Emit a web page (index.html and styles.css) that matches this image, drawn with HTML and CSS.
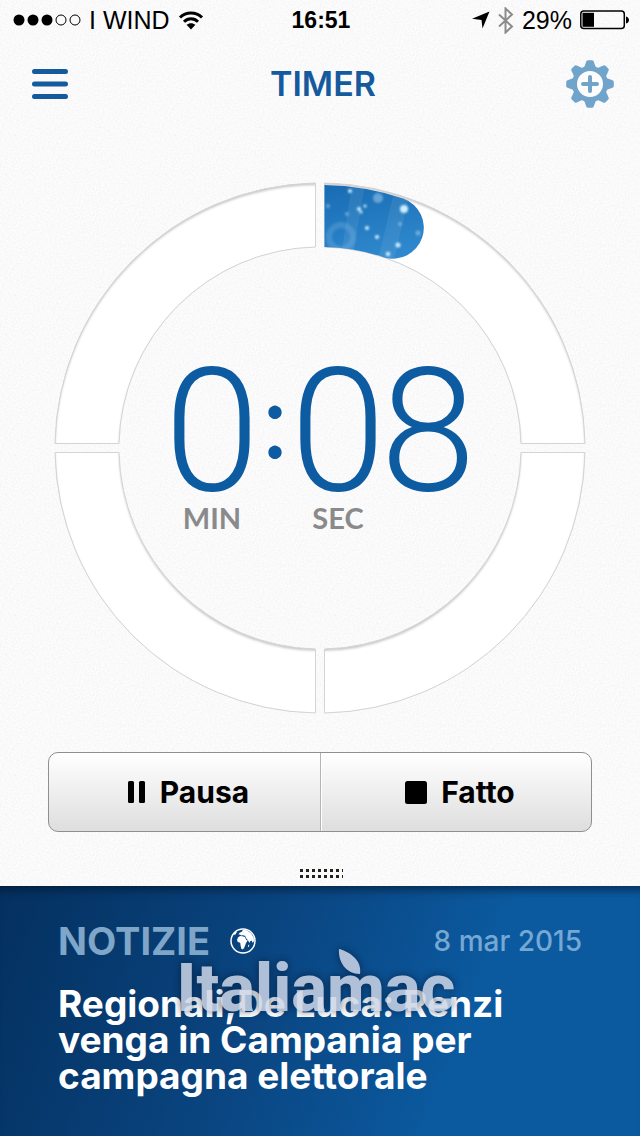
FILE: index.html
```html
<!DOCTYPE html>
<html lang="it">
<head>
  <meta charset="UTF-8">
  <meta name="viewport" content="width=device-width, initial-scale=1.0">
  <title>Timer</title>
  <link rel="stylesheet" href="styles.css">
</head>
<body>
  <div class="status-bar">
    <div class="status-left">
      <svg class="signal" viewBox="0 0 68 12" width="68" height="12">
        <circle cx="6" cy="6" r="5.5"/><circle cx="20" cy="6" r="5.5"/><circle cx="34" cy="6" r="5.5"/>
        <circle class="empty" cx="48" cy="6" r="5"/><circle class="empty" cx="62" cy="6" r="5"/>
      </svg>
      <span>I WIND</span>
      <svg class="wifi" viewBox="0 0 26 19" width="26" height="19">
        <path d="M2 6.5C8 .5 18 .5 24 6.5M6 10.8c4-4 10-4 14 0"/>
        <path class="solid" d="M13 18.5l-4.4-4.7c2.5-2.2 6.3-2.2 8.8 0z"/>
      </svg>
    </div>
    <span class="clock">16:51</span>
    <div class="status-right">
      <svg viewBox="0 0 18 18" width="18" height="18"><path d="M17.500.5L10.500 17.500 9.500 9 0 7.800z"/></svg>
      <svg class="bluetooth" viewBox="0 0 16 27" width="16" height="27"><path d="M1 7.500l13 12-6.500 6V1.500l6.500 6-13 12"/></svg>
      <span>29%</span>
      <svg class="battery" viewBox="0 0 49 20" width="49" height="20">
        <rect class="shell" x=".8" y="1" width="43.500" height="17.500" rx="3"/>
        <rect x="2.500" y="2.800" width="11.500" height="14"/>
        <path d="M46 6.500c4 1 4 6 0 7z"/>
      </svg>
    </div>
  </div>

  <header class="nav">
    <button class="icon-button" type="button" aria-label="Menu">
      <svg class="menu-icon" viewBox="0 0 36 32" width="36" height="32"><path d="M2.500 3.500h31M2.500 16h31M2.500 28.500h31"/></svg>
    </button>
    <h1>TIMER</h1>
    <button class="icon-button" type="button" aria-label="Impostazioni">
      <svg class="gear-icon" viewBox="-24 -24 48 48" width="48" height="48">
        <defs><path id="tooth" d="M-6.500-15L-3.700-22.500Q-3.200-23.800-2-23.800h4Q3.200-23.800 3.700-22.500L6.500-15z"/></defs>
        <use href="#tooth"/>
        <use href="#tooth" transform="rotate(45)"/>
        <use href="#tooth" transform="rotate(90)"/>
        <use href="#tooth" transform="rotate(135)"/>
        <use href="#tooth" transform="rotate(180)"/>
        <use href="#tooth" transform="rotate(225)"/>
        <use href="#tooth" transform="rotate(270)"/>
        <use href="#tooth" transform="rotate(315)"/>
        <circle class="ring" r="15.500"/>
        <path class="plus" d="M0-7V7M-7 0H7"/>
      </svg>
    </button>
  </header>

  <main class="timer">
    <div class="dial">
      <svg class="dial-ring" viewBox="-272 -272 544 544">
        <defs>
          <path id="quarter" d="M4.500-265A265 265 0 0 1 265-4.500H201A201 201 0 0 0 4.500-201z"/>
          <clipPath id="ring-clip">
            <use href="#quarter"/>
            <use href="#quarter" transform="rotate(90)"/>
            <use href="#quarter" transform="rotate(180)"/>
            <use href="#quarter" transform="rotate(270)"/>
          </clipPath>
          <filter id="soft" x="-20%" y="-20%" width="140%" height="140%"><feGaussianBlur stdDeviation="1.200"/></filter>
          <filter id="glow" x="-50%" y="-50%" width="200%" height="200%"><feGaussianBlur stdDeviation="1"/></filter>
          <linearGradient id="water" x1="0" y1="0" x2=".3" y2="1">
            <stop offset="0" stop-color="#176bb2"/>
            <stop offset="1" stop-color="#2f88cd"/>
          </linearGradient>
          <clipPath id="progress-clip">
            <path d="M4.500-263A263 263 0 0 1 83.900-249.300A31 31 0 0 1 64.100-190.600A201 201 0 0 0 4.500-201z"/>
          </clipPath>
        </defs>
        <g clip-path="url(#ring-clip)">
          <rect class="groove" x="-270" y="-270" width="540" height="540"/>
          <circle class="track" r="233" cy="2" filter="url(#soft)"/>
        </g>
        <g class="quarters">
          <use href="#quarter"/>
          <use href="#quarter" transform="rotate(90)"/>
          <use href="#quarter" transform="rotate(180)"/>
          <use href="#quarter" transform="rotate(270)"/>
        </g>
        <g clip-path="url(#progress-clip)">
          <rect x="4" y="-264" width="104" height="78" fill="url(#water)"/>
          <path class="ray" d="M32-264h13l-11 66h-12zM76-264h16l-18 76H58z"/>
          <g filter="url(#glow)">
            <circle class="halo" cx="21" cy="-211" r="12"/>
          </g>
          <g class="spark" filter="url(#glow)">
            <circle cx="84" cy="-239" r="4"/>
            <circle class="dim" cx="58" cy="-250" r="5"/>
            <circle cx="30" cy="-257" r="2"/>
            <circle cx="39" cy="-239" r="2"/>
            <circle cx="45" cy="-242" r="1.500"/>
            <circle cx="41" cy="-236" r="1.500"/>
            <circle cx="47" cy="-220" r="2"/>
            <circle cx="57" cy="-211" r="2"/>
            <circle cx="78" cy="-203" r="2.500"/>
            <circle cx="68" cy="-194" r="2.200"/>
            <circle class="dim" cx="8" cy="-242" r="2"/>
            <circle class="dim" cx="80" cy="-224" r="2"/>
            <circle class="dim" cx="98" cy="-215" r="2.500"/>
            <circle class="dim" cx="27" cy="-234" r="2"/>
          </g>
        </g>
      </svg>
      <div class="readout">
        <span class="digit">0</span>
        <span class="colon">:</span>
        <span class="digit">0</span>
        <span class="digit">8</span>
        <span class="unit">MIN</span>
        <span class="unit unit-sec">SEC</span>
      </div>
    </div>

    <div class="controls">
      <button type="button">
        <svg viewBox="0 0 18 24" width="18" height="24"><rect y="1" width="6" height="22" rx="1.500"/><rect x="11" y="1" width="6" height="22" rx="1.500"/></svg>
        Pausa
      </button>
      <button type="button">
        <svg viewBox="0 0 22 24" width="22" height="24"><rect y="1" width="22" height="23" rx="2.500"/></svg>
        Fatto
      </button>
    </div>
    <div class="grip"></div>
  </main>

  <section class="news">
    <div class="news-head">
      <h2>NOTIZIE</h2>
      <svg class="globe" viewBox="0 0 26 26" width="26" height="26">
        <circle class="outline" cx="13" cy="13" r="12"/>
        <path d="M8 9.500l2-1.500 2.500.3 2.500.6 1.200 3 1.600.3-1.800 2.800-.7 2-1.300 3.200-1.500 1.200-1.300-.8-.6-3-.4-2.800-2.400-.8L7 12z"/>
        <path d="M8.500 6.500l.8-1.500L12 3.500l1-1.800 4 .5 4 3 2.700 4.300.3 3.500-1.300 2-1-2.500-1.500.8-.8 1.700-1.200-2.500-1.700-1.800-1.500-3-2.200-.5-1.500.4-1.500-1z"/>
        <path d="M18.300 17l1-.5-.4 2.300-1 .2zM3 6l2.500-2.500L7 4 5 7z"/>
      </svg>
      <time datetime="2015-03-08">8 mar 2015</time>
    </div>
    <p class="headline">Regionali,De Luca: Renzi venga in Campania per campagna elettorale</p>
    <div class="watermark">
      <div class="logo">
        <span>Italiamac</span>
        <svg class="leaf" viewBox="0 0 24 28" width="24" height="28"><path d="M1 1C12 4 24 12 22 26 8 26 0 14 1 1z"/></svg>
      </div>
    </div>
  </section>
</body>
</html>
```
FILE: styles.css
```css
:root {
  --paper: #fdfdfe;
  --blue: #0d5ba1;
  --title: #155a9d;
  --pale-blue: #70a4cb;
  --grey: #8a8a8a;
}
* {
  box-sizing: border-box;
}
body {
  margin: 0;
  min-height: 100vh;
  display: flex;
  flex-direction: column;
  font-family: Inter, "Liberation Sans", sans-serif;
  color: #000;
  background-color: var(--paper);
  /* paper grain */
  background-image: url("data:image/svg+xml,%3Csvg xmlns='http://www.w3.org/2000/svg' width='160' height='160'%3E%3Cfilter id='n' x='0' y='0' width='100%25' height='100%25'%3E%3CfeTurbulence type='fractalNoise' baseFrequency='.6' numOctaves='2' stitchTiles='stitch'/%3E%3CfeColorMatrix values='0 0 0 0 .3 0 0 0 0 .3 0 0 0 0 .33 .16 0 0 0 -.05'/%3E%3C/filter%3E%3Crect width='160' height='160' filter='url(%23n)'/%3E%3C/svg%3E");
}
button {
  font: inherit;
  color: inherit;
  border: 0;
  padding: 0;
  background: none;
  cursor: pointer;
}
h1, h2, p {
  margin: 0;
}

/* status bar */
.status-bar {
  display: grid;
  grid-template-columns: 1fr auto 1fr;
  align-items: center;
  height: 40px;
  padding: 0 11px 0 13px;
  font-family: "Liberation Sans", Arial, sans-serif;
  font-size: 25px;
}
.status-left,
.status-right {
  display: flex;
  align-items: center;
  gap: 8px;
}
.status-right {
  justify-content: flex-end;
}
.clock {
  font-weight: bold;
  font-size: 23px;
}
.signal .empty {
  fill: none;
  stroke: #000;
}
.wifi path {
  fill: none;
  stroke: #000;
  stroke-width: 3;
}
.wifi .solid {
  fill: #000;
  stroke: none;
}
.bluetooth {
  fill: none;
  stroke: #8c8c8c;
  stroke-width: 2;
}
.battery .shell {
  fill: none;
  stroke: #000;
  stroke-width: 1.5;
}

/* navigation */
.nav {
  display: flex;
  align-items: center;
  justify-content: space-between;
  height: 88px;
  padding: 0 26px 0 32px;
}
.nav h1 {
  font-size: 34px;
  line-height: 40px;
  font-weight: 600;
  color: var(--title);
}
.icon-button {
  display: flex;
  width: 48px;
}
.menu-icon {
  stroke: var(--title);
  stroke-width: 5;
  stroke-linecap: round;
}
.gear-icon {
  fill: var(--pale-blue);
}
.gear-icon .ring {
  fill: #fdfdfe;
  stroke: var(--pale-blue);
  stroke-width: 5;
}
.gear-icon .plus {
  stroke: var(--pale-blue);
  stroke-width: 4;
  stroke-linecap: round;
}

/* dial */
.timer {
  display: flex;
  flex-direction: column;
  align-items: center;
  padding: 48px 48px 8px;
}
.dial {
  display: grid;
  place-items: center;
  width: 100%;
}
.dial-ring,
.readout {
  grid-area: 1 / 1;
}
.dial-ring {
  width: 100%;
}
.groove {
  fill: #c8c8cb;
}
.track {
  fill: none;
  stroke: #fff;
  stroke-width: 64;
}
.quarters {
  fill: none;
  stroke: #d4d4d6;
}
.ray {
  fill: #fff;
  opacity: .07;
}
.halo {
  fill: none;
  stroke: #8ec4ee;
  stroke-width: 6;
  opacity: .25;
}
.spark {
  fill: #cdeeff;
}
.spark .dim {
  opacity: .4;
}
.readout {
  display: grid;
  grid-template-columns: 90px 36px 90px 90px;
  row-gap: 4px;
  justify-items: center;
  align-items: center;
  color: var(--blue);
  font-family: Lato, sans-serif;
}
.digit {
  font-family: Roboto, sans-serif;
  font-weight: 300;
  font-size: 172px;
  line-height: 136px;
}
.colon {
  padding-bottom: 28px;
  font-size: 106px;
  line-height: 104px;
}
.unit {
  font-size: 29px;
  line-height: 30px;
  font-weight: bold;
  color: var(--grey);
}
.unit-sec {
  grid-column: 3;
}

/* buttons */
.controls {
  display: grid;
  grid-template-columns: 1fr 1fr;
  width: 100%;
  height: 80px;
  margin-top: 32px;
  border: 1px solid #8f8f91;
  border-radius: 10px;
  overflow: hidden;
  background: linear-gradient(#fff, #dededf);
}
.controls button {
  display: flex;
  align-items: center;
  justify-content: center;
  gap: 14px;
  padding-left: 8px;
  font-size: 30px;
  font-weight: 700;
}
.controls button + button {
  border-left: 1px solid #b4b4b6;
  box-shadow: inset 1px 0 #fff;
}
.grip {
  width: 46px;
  height: 9px;
  margin-top: 37px;
  background: conic-gradient(from 90deg at 3px 3px, transparent 75%, #23221a 0) 0 0 / 6px 6px;
}

/* news */
.news {
  position: relative;
  flex: 1;
  padding: 36px 58px;
  color: #fff;
  background: linear-gradient(110deg, #04305f 0%, #0a4682 42%, #0b5aa0 72%);
  box-shadow: inset 0 12px 10px -8px rgba(0, 20, 40, .6);
}
.news-head {
  display: flex;
  align-items: center;
  gap: 20px;
  margin-bottom: 26px;
}
.news h2 {
  font-size: 38px;
  line-height: 38px;
  font-weight: 700;
  color: #7fa6c8;
}
.news time {
  margin-left: auto;
  font-size: 28px;
  line-height: 38px;
  font-weight: 500;
  color: #75a8d3;
}
.globe {
  fill: #fff;
}
.globe .outline {
  fill: none;
  stroke: #fff;
  stroke-width: 1.5;
}
.headline {
  max-width: 480px;
  font-size: 37px;
  line-height: 36px;
  font-weight: 700;
}
.watermark {
  position: absolute;
  top: 60px;
  left: 0;
  right: 8px;
  display: flex;
  justify-content: center;
  font-family: Roboto, sans-serif;
  font-size: 67px;
  line-height: 84px;
  font-weight: 800;
  color: #ccd5e6;
  opacity: .85;
  filter: drop-shadow(0 0 4px rgba(0, 15, 40, .7));
  pointer-events: none;
}
.logo {
  position: relative;
}
.leaf {
  position: absolute;
  top: 2px;
  left: 58%;
  fill: #ccd5e6;
}
```
